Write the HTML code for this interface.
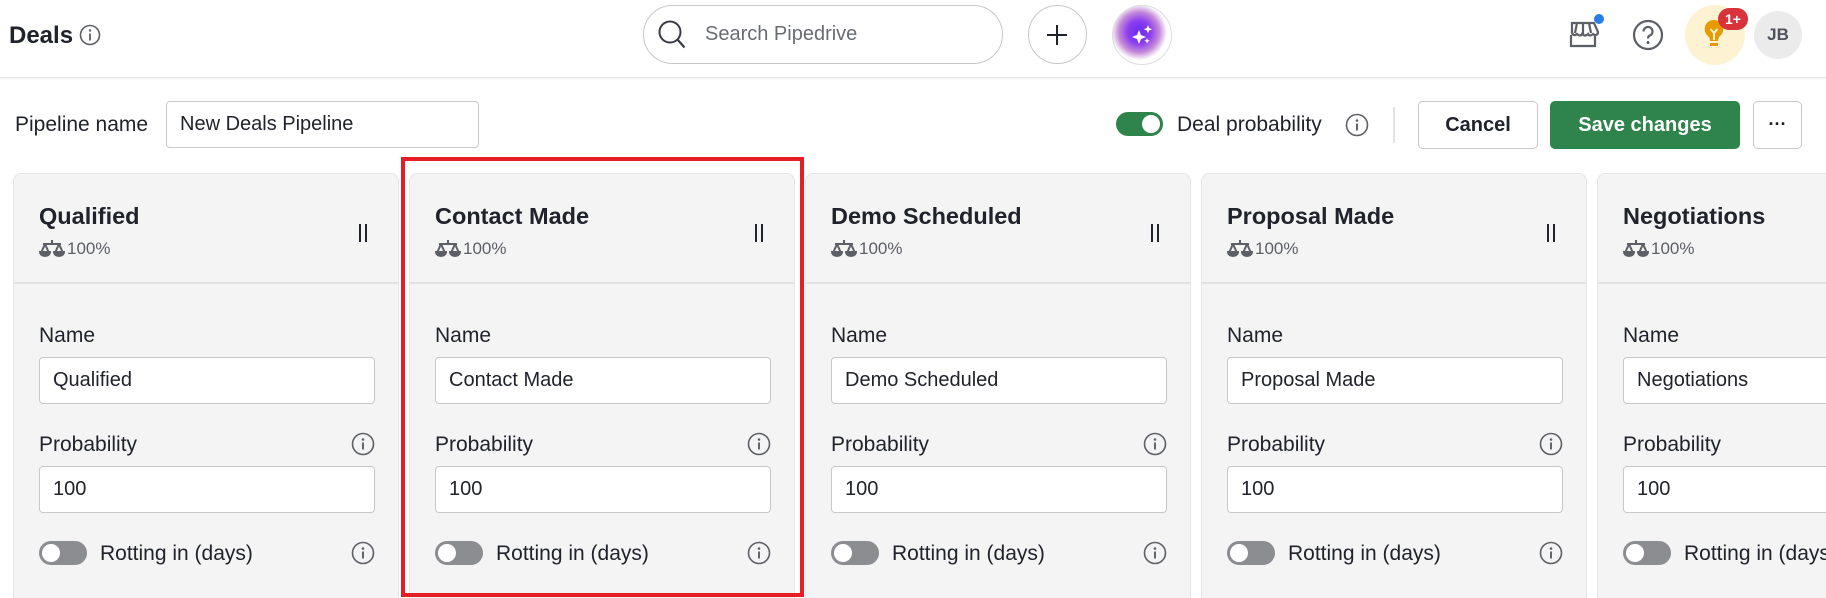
<!DOCTYPE html>
<html><head><meta charset="utf-8"><style>
*{box-sizing:border-box;margin:0;padding:0}
html,body{width:1826px;height:598px;overflow:hidden}
body{background:#fff;font-family:"Liberation Sans",sans-serif;color:#21232c;position:relative}
#wrap{position:absolute;left:0;top:0;width:1826px;height:598px;overflow:hidden}
.a{position:absolute}
.hdr{left:0;top:0;width:1826px;height:78px;border-bottom:1px solid #e3e3e3;box-shadow:0 1px 2px rgba(0,0,0,.05)}
.circ{border-radius:50%}
.inp{background:#fff;border:1px solid #c8c8ca;border-radius:4px;font-size:20px;padding-left:13px;display:flex;align-items:center}
.card{top:173px;width:386px;height:440px;background:#f4f4f4;border-radius:8px;border:1px solid #e6e6e6}
.card .t{left:25px;top:29px;font-size:23.5px;font-weight:bold}
.card .p{left:25px;top:65px;font-size:17px;color:#5d5f66;display:flex;align-items:center;gap:2px}
.card .hl{left:0;top:108px;width:100%;height:2px;background:#e2e2e2}
.lbl{font-size:21px}
.tg{width:48px;height:24px;border-radius:12px;background:#8c8d91}
.tg:after{content:"";position:absolute;left:3px;top:3px;width:18px;height:18px;border-radius:50%;background:#fff}
</style></head><body><div id="wrap">
<div class="a hdr"></div>
<div class="a" style="left:9px;top:22px;font-size:24px;font-weight:bold">Deals</div>
<svg class="a" style="left:79px;top:24px" width="22" height="22" viewBox="0 0 22 22"><circle cx="11" cy="11" r="9.5" fill="none" stroke="#5d5f66" stroke-width="1.6"/><circle cx="11" cy="6.5" r="1.2" fill="#5d5f66"/><path d="M11 9.5v7" stroke="#5d5f66" stroke-width="1.8"/></svg>
<div class="a" style="left:643px;top:5px;width:360px;height:59px;border:1px solid #c8c8ca;border-radius:30px"></div>
<svg class="a" style="left:656px;top:19px" width="34" height="32" viewBox="0 0 34 32"><circle cx="14" cy="13" r="10.5" fill="none" stroke="#3a3c44" stroke-width="2"/><path d="M21.5 20.5l7 8" stroke="#3a3c44" stroke-width="2.2"/></svg>
<div class="a" style="left:705px;top:23px;font-size:20px;color:#6a6c73">Search Pipedrive</div>
<div class="a circ" style="left:1028px;top:5px;width:59px;height:59px;border:1px solid #c8c8ca"></div>
<svg class="a" style="left:1045px;top:23px" width="24" height="24"><path d="M12 2v20M2 12h20" stroke="#21232c" stroke-width="2"/></svg>
<div class="a circ" style="left:1112px;top:5px;width:60px;height:60px;border:1px solid #ddd;background:radial-gradient(circle at 45% 45%,#6a2cf0 0,#8a3cf0 25%,#c48ad8 45%,#fff 62%)"></div>
<svg class="a" style="left:1130px;top:22px" width="26" height="26" viewBox="0 0 26 26" fill="#fff"><path d="M9 8l2 5 5 2-5 2-2 5-2-5-5-2 5-2z"/><path d="M18 3l1.2 3 3 1.2-3 1.2-1.2 3-1.2-3-3-1.2 3-1.2z"/><path d="M17 16l.8 2 2 .8-2 .8-.8 2-.8-2-2-.8 2-.8z"/></svg>
<svg class="a" style="left:1566px;top:20px" width="34" height="30" viewBox="0 0 34 30" fill="none" stroke="#5d5f66" stroke-width="2.2"><path d="M6 3h22l4 9c0 3-3 4-5 2-2 2-4 2-5 0-2 2-4 2-6 0-1 2-3 2-5 0-2 2-5 1-5-2z"/><path d="M5 15v11h24V15"/><path d="M11 3l-2 10M17 3v11M23 3l2 10"/></svg>
<div class="a circ" style="left:1594px;top:14px;width:10px;height:10px;background:#2a7de1"></div>
<svg class="a" style="left:1632px;top:19px" width="32" height="32" viewBox="0 0 32 32"><circle cx="16" cy="16" r="14" fill="none" stroke="#5d5f66" stroke-width="2.2"/><path d="M11.5 12.5a4.5 4.5 0 1 1 6 4.2c-1.2.5-1.5 1.3-1.5 2.8" fill="none" stroke="#5d5f66" stroke-width="2.2"/><circle cx="16" cy="23.5" r="1.5" fill="#5d5f66"/></svg>
<div class="a circ" style="left:1685px;top:5px;width:60px;height:60px;background:#fdf3d3"></div>
<svg class="a" style="left:1702px;top:18px" width="24" height="32" viewBox="0 0 24 32"><path d="M12 2a9 9 0 0 0-6 16c1.5 1.5 2 3 2 5h8c0-2 .5-3.5 2-5A9 9 0 0 0 12 2z" fill="#e99a00"/><path d="M8 25h8v3H8z" fill="#e99a00"/><path d="M8.5 11l3.5 4 3.5-4M12 15v7" stroke="#fdf3d3" stroke-width="2" fill="none"/></svg>
<div class="a" style="left:1718px;top:8px;width:30px;height:22px;border-radius:11px;background:#d8333b;color:#fff;font-size:14px;font-weight:bold;text-align:center;line-height:22px">1+</div>
<div class="a circ" style="left:1754px;top:11px;width:48px;height:48px;background:#ebebeb;color:#4f525a;font-size:17px;font-weight:bold;text-align:center;line-height:48px">JB</div>

<div class="a lbl" style="left:15px;top:113px">Pipeline name</div>
<div class="a inp" style="left:166px;top:101px;width:313px;height:47px">New Deals Pipeline</div>
<div class="a" style="left:1116px;top:112px;width:47px;height:24px;border-radius:12px;background:#2e844a"></div>
<div class="a circ" style="left:1142px;top:115px;width:18px;height:18px;background:#fff"></div>
<div class="a lbl" style="left:1177px;top:113px">Deal probability</div>
<svg class="a" style="left:1345px;top:113px" width="24" height="24" viewBox="0 0 24 24"><circle cx="12" cy="12" r="10.5" fill="none" stroke="#5d5f66" stroke-width="1.6"/><circle cx="12" cy="7.5" r="1.3" fill="#5d5f66"/><path d="M12 10.5v7" stroke="#5d5f66" stroke-width="1.9"/></svg>
<div class="a" style="left:1393px;top:107px;width:2px;height:36px;background:#e2e2e2"></div>
<div class="a" style="left:1418px;top:101px;width:120px;height:48px;border:1px solid #c8c8ca;border-radius:5px;font-size:20px;font-weight:bold;text-align:center;line-height:46px">Cancel</div>
<div class="a" style="left:1550px;top:101px;width:190px;height:48px;background:#2e844a;border-radius:5px;color:#fff;font-size:20px;font-weight:bold;text-align:center;line-height:48px">Save changes</div>
<div class="a" style="left:1753px;top:101px;width:49px;height:48px;border:1px solid #c8c8ca;border-radius:5px;font-size:18px;font-weight:bold;text-align:center;line-height:44px">···</div>

<div id="cards"></div>
</div>
<script>
var n=["Qualified","Contact Made","Demo Scheduled","Proposal Made","Negotiations"],h="";
var info='<svg width="24" height="24" viewBox="0 0 24 24"><circle cx="12" cy="12" r="10.5" fill="none" stroke="#5d5f66" stroke-width="1.6"/><circle cx="12" cy="7.5" r="1.3" fill="#5d5f66"/><path d="M12 10.5v7" stroke="#5d5f66" stroke-width="1.9"/></svg>';
var sc='<svg width="26" height="18" viewBox="0 0 26 18" fill="none" stroke="#5d5f66" stroke-width="2"><path d="M13 0v4M4 4h18"/><path d="M6 4l-4 9M6 4l4 9M20 4l-4 9M20 4l4 9"/><path d="M1 12h10a5 4 0 0 1-10 0zM15 12h10a5 4 0 0 1-10 0z" fill="#5d5f66"/></svg>';
for(var i=0;i<5;i++){var x=13+i*396;
h+='<div class="a card" style="left:'+x+'px"><div class="a t">'+n[i]+'</div><div class="a p">'+sc+'100%</div>'+
'<div class="a" style="left:345px;top:50px;width:8px;height:18px;border-left:2px solid #21232c;border-right:2px solid #21232c"></div>'+
'<div class="a hl"></div><div class="a lbl" style="left:25px;top:150px">Name</div>'+
'<div class="a inp" style="left:25px;top:183px;width:336px;height:47px">'+n[i]+'</div>'+
'<div class="a lbl" style="left:25px;top:259px">Probability</div><div class="a" style="left:337px;top:258px">'+info+'</div>'+
'<div class="a inp" style="left:25px;top:292px;width:336px;height:47px">100</div>'+
'<div class="a tg" style="left:25px;top:367px"></div><div class="a lbl" style="left:86px;top:368px">Rotting in (days)</div><div class="a" style="left:337px;top:367px">'+info+'</div></div>';}
h+='<div class="a" style="left:401px;top:157px;width:403px;height:440px;border:4px solid #e51e25"></div>';
document.getElementById("cards").innerHTML=h;
</script>
</body></html>
